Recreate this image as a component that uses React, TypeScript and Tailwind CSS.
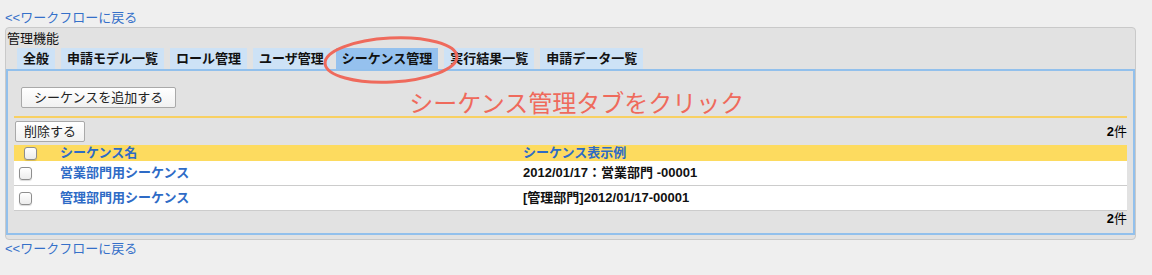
import React from 'react';

const tabs = ['全般', '申請モデル一覧', 'ロール管理', 'ユーザ管理', 'シーケンス管理', '実行結果一覧', '申請データ一覧'];

const rows = [
  { name: '営業部門用シーケンス', sample: '2012/01/17：営業部門 -00001' },
  { name: '管理部門用シーケンス', sample: '[管理部門]2012/01/17-00001' },
];

const Check: React.FC = () => (
  <span className="block h-[13px] w-[13px] rounded-[3px] border border-[#8e8e8e] bg-gradient-to-b from-white to-[#ececec] shadow-[0_1px_1px_rgba(0,0,0,0.15)]" />
);

const Count: React.FC = () => (
  <span className="text-[13px] leading-[16px] text-black">
    <b>2</b>件
  </span>
);

const App: React.FC = () => {
  const active = 'シーケンス管理';

  return (
    <div className="relative min-h-screen bg-[#efefef] px-[5px] pt-[9px] font-['Liberation_Sans','Noto_Sans_CJK_JP',sans-serif] text-[13px] text-[#111]">
      <a className="block leading-[18px] text-[#3570c9]">&lt;&lt;ワークフローに戻る</a>

      {/* panel */}
      <div className="w-[1131px] rounded-[4px] border border-[#c9c9c9] bg-[#e2e2e2] pb-[4px]">
        <div className="pl-[1px] pt-[2px] text-[13px] leading-[18px]">管理機能</div>

        <div className="ml-[11px] flex gap-[6px]">
          {tabs.map((t) => (
            <span
              key={t}
              className={`px-[6px] text-[13px] font-bold leading-[21px] ${
                t === active ? 'bg-[#95c1ee]' : 'bg-[#cde2f6]'
              }`}
            >
              {t}
            </span>
          ))}
        </div>

        <div className="border-2 border-[#92c0ec] px-[6px] pb-[6px]">
          <div className="flex items-start">
            <button className="ml-[7px] mt-[16px] h-[21px] rounded-[2px] border border-[#a9a9a9] bg-gradient-to-b from-white to-[#f1f1f1] px-[12px] text-[13px] leading-[19px] text-[#222]">
              シーケンスを追加する
            </button>
            <span className="ml-[233px] mt-[21px] text-[24px] leading-[24px] text-[#ef6a5c]">
              シーケンス管理タブをクリック
            </span>
          </div>

          <div className="h-[2px] bg-[#f8d062]" />

          <div className="mt-[3px] flex items-center justify-between">
            <button className="ml-[1px] h-[21px] rounded-[2px] border border-[#a9a9a9] bg-gradient-to-b from-white to-[#f1f1f1] px-[8px] text-[13px] leading-[19px] text-[#222]">
              削除する
            </button>
            <Count />
          </div>

          {/* table */}
          <div className="mt-[3px]">
            <div className="grid h-[16px] grid-cols-[46px_463px_1fr] items-center bg-[#fddb5f] text-[13px] font-bold leading-[16px] text-[#2e6bc6]">
              <span className="pl-[10px]">
                <Check />
              </span>
              <span>シーケンス名</span>
              <span>シーケンス表示例</span>
            </div>
            {rows.map((r) => (
              <div
                key={r.name}
                className="grid h-[25px] grid-cols-[46px_463px_1fr] items-center border-b border-[#cccccc] bg-white text-[13px] font-bold"
              >
                <span className="pl-[5px]">
                  <Check />
                </span>
                <span className="text-[#2e6bc6]">{r.name}</span>
                <span className="text-[#111]">{r.sample}</span>
              </div>
            ))}
          </div>

          <div className="flex justify-end pt-[0px]">
            <Count />
          </div>
        </div>
      </div>

      <a className="block leading-[18px] text-[#3570c9]">&lt;&lt;ワークフローに戻る</a>

      {/* annotation ellipse */}
      <svg className="absolute left-[320px] top-[33px] h-[54px] w-[142px]" viewBox="0 0 142 54">
        <ellipse
          cx="71"
          cy="27"
          rx="66"
          ry="22"
          fill="none"
          stroke="#ef6a5c"
          strokeWidth="3"
          transform="rotate(-3 71 27)"
        />
      </svg>
    </div>
  );
};

export default App;
